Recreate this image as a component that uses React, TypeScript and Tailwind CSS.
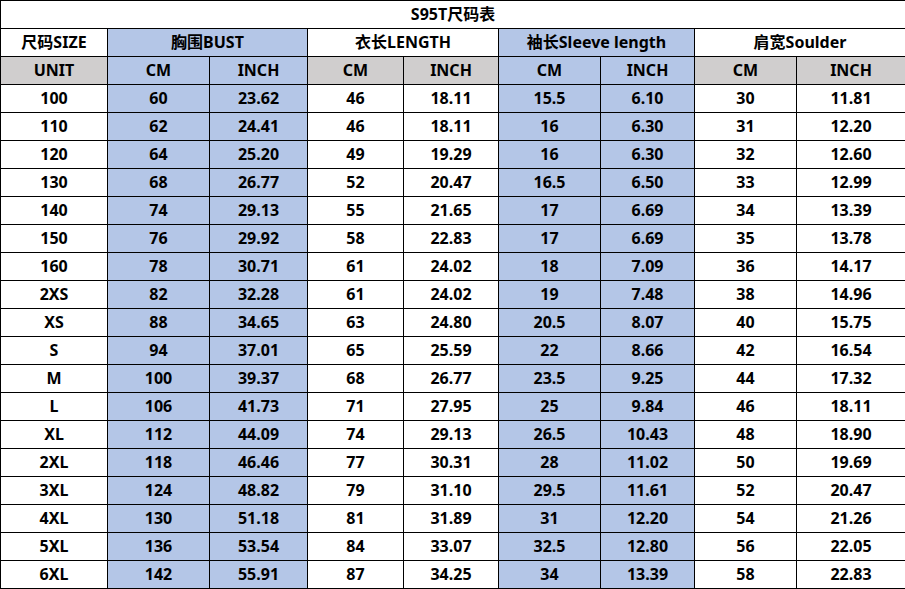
const rows: string[][] = [
  ["100", "60", "23.62", "46", "18.11", "15.5", "6.10", "30", "11.81"],
  ["110", "62", "24.41", "46", "18.11", "16", "6.30", "31", "12.20"],
  ["120", "64", "25.20", "49", "19.29", "16", "6.30", "32", "12.60"],
  ["130", "68", "26.77", "52", "20.47", "16.5", "6.50", "33", "12.99"],
  ["140", "74", "29.13", "55", "21.65", "17", "6.69", "34", "13.39"],
  ["150", "76", "29.92", "58", "22.83", "17", "6.69", "35", "13.78"],
  ["160", "78", "30.71", "61", "24.02", "18", "7.09", "36", "14.17"],
  ["2XS", "82", "32.28", "61", "24.02", "19", "7.48", "38", "14.96"],
  ["XS", "88", "34.65", "63", "24.80", "20.5", "8.07", "40", "15.75"],
  ["S", "94", "37.01", "65", "25.59", "22", "8.66", "42", "16.54"],
  ["M", "100", "39.37", "68", "26.77", "23.5", "9.25", "44", "17.32"],
  ["L", "106", "41.73", "71", "27.95", "25", "9.84", "46", "18.11"],
  ["XL", "112", "44.09", "74", "29.13", "26.5", "10.43", "48", "18.90"],
  ["2XL", "118", "46.46", "77", "30.31", "28", "11.02", "50", "19.69"],
  ["3XL", "124", "48.82", "79", "31.10", "29.5", "11.61", "52", "20.47"],
  ["4XL", "130", "51.18", "81", "31.89", "31", "12.20", "54", "21.26"],
  ["5XL", "136", "53.54", "84", "33.07", "32.5", "12.80", "56", "22.05"],
  ["6XL", "142", "55.91", "87", "34.25", "34", "13.39", "58", "22.83"],
];

const widths = [107, 102, 98, 96, 95, 102, 94, 102, 109];
// columns with the blue fill: bust and sleeve
const isBlue = (i: number) => i === 1 || i === 2 || i === 5 || i === 6;

const cell = "border border-black text-center align-middle p-0 pb-[2px] leading-none";

export default function App() {
  return (
    <div className="w-[905px] h-[589px] bg-white overflow-hidden">
      <table
        className="table-fixed border-collapse w-[905px] text-[16px] font-bold text-black"
        style={{ fontFamily: '"Noto Sans", "Noto Sans CJK SC", sans-serif' }}
      >
        <colgroup>
          {widths.map((w, i) => (
            <col key={i} style={{ width: w }} />
          ))}
        </colgroup>
        <tbody>
          <tr className="h-[28px]">
            <td colSpan={9} className={`${cell} bg-white`}>
              S95T尺码表
            </td>
          </tr>
          <tr className="h-[28px]">
            <td className={`${cell} bg-white`}>尺码SIZE</td>
            <td colSpan={2} className={`${cell} bg-[#b4c6e7]`}>
              胸围BUST
            </td>
            <td colSpan={2} className={`${cell} bg-white`}>
              衣长LENGTH
            </td>
            <td colSpan={2} className={`${cell} bg-[#b4c6e7]`}>
              袖长Sleeve length
            </td>
            <td colSpan={2} className={`${cell} bg-white`}>
              肩宽Soulder
            </td>
          </tr>
          <tr className="h-[28px]">
            {["UNIT", "CM", "INCH", "CM", "INCH", "CM", "INCH", "CM", "INCH"].map(
              (t, i) => (
                <td
                  key={i}
                  className={`${cell} ${isBlue(i) ? "bg-[#b4c6e7]" : "bg-[#d0cece]"}`}
                >
                  {t}
                </td>
              )
            )}
          </tr>
          {rows.map((r, ri) => (
            <tr key={ri} className="h-[28px]">
              {r.map((v, i) => (
                <td
                  key={i}
                  className={`${cell} ${isBlue(i) ? "bg-[#b4c6e7]" : "bg-white"}`}
                >
                  {v}
                </td>
              ))}
            </tr>
          ))}
        </tbody>
      </table>
    </div>
  );
}
